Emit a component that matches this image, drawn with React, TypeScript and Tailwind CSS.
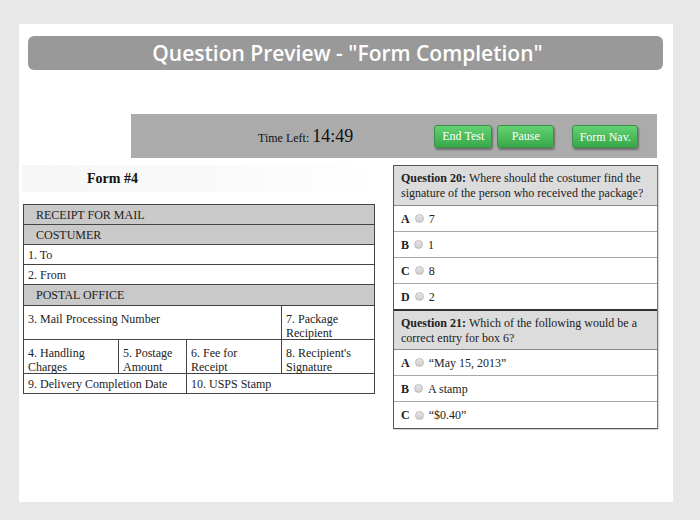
const serif = { fontFamily: '"Liberation Serif", "Times New Roman", serif' };

function Radio() {
  return (
    <span className="inline-block w-[9px] h-[9px] rounded-full border border-[#bdbdbd] bg-gradient-to-b from-[#e4e4e4] to-[#cfcfcf] mx-[5px]" />
  );
}

function GreenButton({ label, w }: { label: string; w: string }) {
  return (
    <button
      type="button"
      className={`${w} h-[23px] rounded-[3px] border border-[#3c8f47] bg-gradient-to-b from-[#63d272] to-[#37a848] text-white text-[12px] shadow-[1px_2px_2px_rgba(0,0,0,0.35)]`}
      style={serif}
    >
      {label}
    </button>
  );
}

const answersA = [
  ['A', '7'],
  ['B', '1'],
  ['C', '8'],
  ['D', '2'],
];
const answersB = [
  ['A', '\u201cMay 15, 2013\u201d'],
  ['B', 'A stamp'],
  ['C', '\u201c$0.40\u201d'],
];

function Answer({ letter, text, last }: { letter: string; text: string; last?: boolean }) {
  return (
    <div className={`h-[26px] flex items-center px-[7px] ${last ? '' : 'border-b border-[#a8a8a8]'}`}>
      <span className="font-bold">{letter}</span>
      <Radio />
      <span>{text}</span>
    </div>
  );
}

function QuestionHead({ num, line1, line2, first }: { num: number; line1: string; line2: string; first?: boolean }) {
  return (
    <div
      className={`h-[40px] bg-[#dcdcdc] border-b border-[#888] px-[7px] pt-[5px] leading-[15px] ${first ? '' : 'h-[41px] border-t-2 border-t-[#333] -mt-[1px]'}`}
    >
      <div className="flex gap-[3px] whitespace-nowrap">
        <b>Question {num}:</b>
        <span>{line1}</span>
      </div>
      <div>{line2}</div>
    </div>
  );
}

export default function App() {
  const cell = 'border-[#444] px-[4px] leading-[14px] text-[12px]';
  return (
    <div className="w-[700px] h-[520px] bg-[#e8e8e8] pt-[24px] pl-[19px]">
      <div className="w-[654px] h-[478px] bg-white pt-[12px]">
        <div className="ml-[9px] w-[635px] h-[34px] rounded-[6px] bg-[#999999] flex items-center justify-center">
          <span className="text-white text-[21px] font-semibold ml-[4px] mt-[1px]" style={{ fontFamily: '"Open Sans", "Noto Sans", sans-serif' }}>
            Question Preview - &quot;Form Completion&quot;
          </span>
        </div>

        <div className="mt-[44px] ml-[112px] w-[526px] h-[44px] bg-[#ababab] flex items-center" style={serif}>
          <div className="ml-[127px] flex items-baseline text-[#111]">
            <span className="text-[12px]">Time Left:</span>
            <span className="text-[18px] ml-[3px]">14:49</span>
          </div>
          <div className="ml-[81px] flex gap-[5px]">
            <GreenButton label="End Test" w="w-[58px]" />
            <GreenButton label="Pause" w="w-[57px]" />
          </div>
          <div className="ml-[18px]">
            <GreenButton label="Form Nav." w="w-[66px]" />
          </div>
        </div>

        <div className="flex mt-[7px] text-[#222]" style={serif}>
          <div className="ml-[3px] w-[354px]">
            <div className="h-[27px] bg-gradient-to-r from-[#f7f7f7] via-[#f9f9f9] to-white flex items-center">
              <span className="ml-[65px] text-[14px] font-bold text-[#111]">Form #4</span>
            </div>
            <div className="mt-[12px] ml-[1px] w-[352px] border border-[#444] text-[12px]">
              <div className="h-[20px] bg-[#c9c9c9] border-b border-[#444] pl-[12px] flex items-center">RECEIPT FOR MAIL</div>
              <div className="h-[20px] bg-[#c9c9c9] border-b border-[#444] pl-[12px] flex items-center">COSTUMER</div>
              <div className="h-[20px] border-b border-[#444] pl-[4px] flex items-center">1. To</div>
              <div className="h-[20px] border-b border-[#444] pl-[4px] flex items-center">2. From</div>
              <div className="h-[21px] bg-[#c9c9c9] border-b border-[#444] pl-[12px] flex items-center">POSTAL OFFICE</div>
              <div className="grid grid-cols-[95px_68px_95px_1fr] h-[34px] border-b border-[#444]">
                <div className={`${cell} col-span-3 border-r pt-[6px]`}>3. Mail Processing Number</div>
                <div className={`${cell} pt-[6px]`}>7. Package<br />Recipient</div>
              </div>
              <div className="grid grid-cols-[95px_68px_95px_1fr] h-[34px] border-b border-[#444]">
                <div className={`${cell} border-r pt-[6px]`}>4. Handling<br />Charges</div>
                <div className={`${cell} border-r pt-[6px]`}>5. Postage<br />Amount</div>
                <div className={`${cell} border-r pt-[6px]`}>6. Fee for<br />Receipt</div>
                <div className={`${cell} pt-[6px]`}>8. Recipient's<br />Signature</div>
              </div>
              <div className="grid grid-cols-[163px_1fr] h-[19px]">
                <div className={`${cell} border-r flex items-center`}>9. Delivery Completion Date</div>
                <div className={`${cell} flex items-center`}>10. USPS Stamp</div>
              </div>
            </div>
          </div>

          <div className="ml-[17px] w-[265px] border border-[#555] border-r-[#777] text-[12px] shadow-[1px_1px_1px_rgba(0,0,0,0.15)]">
            <QuestionHead
              num={20}
              first
              line1="Where should the costumer find the"
              line2="signature of the person who received the package?"
            />
            {answersA.map(([l, t]) => (
              <Answer key={l} letter={l} text={t} />
            ))}
            <QuestionHead num={21} line1="Which of the following would be a" line2="correct entry for box 6?" />
            {answersB.map(([l, t], i) => (
              <Answer key={l} letter={l} text={t} last={i === answersB.length - 1} />
            ))}
          </div>
        </div>
      </div>
    </div>
  );
}
